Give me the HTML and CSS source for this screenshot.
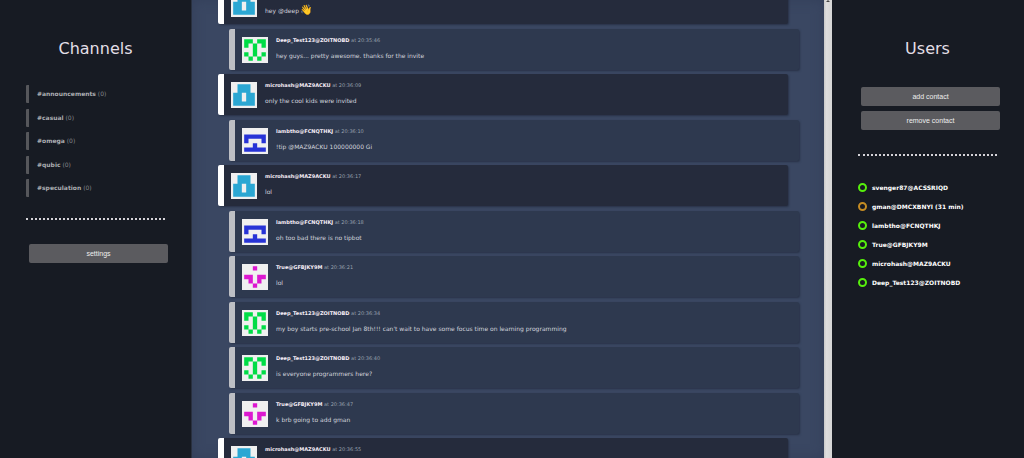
FILE: index.html
```html
<!DOCTYPE html>
<html lang="en">
<head>
    <meta charset="UTF-8">
    <meta name="viewport" content="width=device-width, initial-scale=1.0">
    <title>Chat</title>
    <link rel="stylesheet" href="styles.css">
</head>
<body>
    <!-- Avatars -->
    <svg class="symbols" width="0" height="0" aria-hidden="true">
        <symbol id="deep" viewBox="-1 -1 12 12"><path fill="#00dc46" d="M0 0h4v2h-2v2h-2zM6 0h4v4h-2v-2h-2zM4 2h2v6h-2zM0 6h2v2h-2zM8 6h2v2h-2zM2 8h2v2h-2zM6 8h2v2h-2z"/></symbol>
        <symbol id="micro" viewBox="-1 -1 12 12"><path fill="#2ba7d3" fill-rule="evenodd" d="M2 0h6v4h2v6h-10v-6h2zM4 4v4h2v-4z"/></symbol>
        <symbol id="lamb" viewBox="-1 -1 12 12"><path fill="#2733d6" d="M0 2h10v4h-2v-2h-6v2h-2zM4 6h2v2h4v2h-10v-2h4z"/></symbol>
        <symbol id="true" viewBox="-1 -1 12 12"><path fill="#dc18d0" d="M4 0h2v2h-2zM0 4h4v4h-2v-2h-2zM6 4h4v2h-2v2h-2zM4 8h2v2h-2z"/></symbol>
    </svg>

    <div class="app">
        <aside class="sidebar channels">
            <h1>Channels</h1>
            <ul class="channel-list">
                <li><b>#announcements</b> (0)</li>
                <li><b>#casual</b> (0)</li>
                <li><b>#omega</b> (0)</li>
                <li><b>#qubic</b> (0)</li>
                <li><b>#speculation</b> (0)</li>
            </ul>
            <hr>
            <button type="button">settings</button>
        </aside>

        <main class="chat">
            <div class="messages">
                <article class="message own">
                    <svg class="avatar"><use href="#micro"/></svg>
                    <div><h2></h2><p>hey @deep <span class="emoji">👋</span></p></div>
                </article>
                <article class="message">
                    <svg class="avatar"><use href="#deep"/></svg>
                    <div><h2><b>Deep_Test123@ZOITNOBD</b> at 20:35:46</h2><p>hey guys... pretty awesome. thanks for the invite</p></div>
                </article>
                <article class="message own">
                    <svg class="avatar"><use href="#micro"/></svg>
                    <div><h2><b>microhash@MAZ9ACKU</b> at 20:36:09</h2><p>only the cool kids were invited</p></div>
                </article>
                <article class="message">
                    <svg class="avatar"><use href="#lamb"/></svg>
                    <div><h2><b>lambtho@FCNQTHKJ</b> at 20:36:10</h2><p>!tip @MAZ9ACKU 100000000 Gi</p></div>
                </article>
                <article class="message own">
                    <svg class="avatar"><use href="#micro"/></svg>
                    <div><h2><b>microhash@MAZ9ACKU</b> at 20:36:17</h2><p>lol</p></div>
                </article>
                <article class="message">
                    <svg class="avatar"><use href="#lamb"/></svg>
                    <div><h2><b>lambtho@FCNQTHKJ</b> at 20:36:18</h2><p>oh too bad there is no tipbot</p></div>
                </article>
                <article class="message">
                    <svg class="avatar"><use href="#true"/></svg>
                    <div><h2><b>True@GFBJKY9M</b> at 20:36:21</h2><p>lol</p></div>
                </article>
                <article class="message">
                    <svg class="avatar"><use href="#deep"/></svg>
                    <div><h2><b>Deep_Test123@ZOITNOBD</b> at 20:36:34</h2><p>my boy starts pre-school Jan 8th!!! can't wait to have some focus time on learning programming</p></div>
                </article>
                <article class="message">
                    <svg class="avatar"><use href="#deep"/></svg>
                    <div><h2><b>Deep_Test123@ZOITNOBD</b> at 20:36:40</h2><p>is everyone programmers here?</p></div>
                </article>
                <article class="message">
                    <svg class="avatar"><use href="#true"/></svg>
                    <div><h2><b>True@GFBJKY9M</b> at 20:36:47</h2><p>k brb going to add gman</p></div>
                </article>
                <article class="message own">
                    <svg class="avatar"><use href="#micro"/></svg>
                    <div><h2><b>microhash@MAZ9ACKU</b> at 20:36:55</h2></div>
                </article>
            </div>
        </main>

        <div class="scrollbar">
            <svg width="8" height="4" viewBox="0 0 8 4"><path fill="#444" d="M4 0l2 2h-4z"/></svg>
        </div>

        <aside class="sidebar users">
            <h1>Users</h1>
            <button type="button">add contact</button>
            <button type="button">remove contact</button>
            <hr>
            <ul class="user-list">
                <li>svenger87@ACSSRIQD</li>
                <li class="idle">gman@DMCXBNYI (31 min)</li>
                <li>lambtho@FCNQTHKJ</li>
                <li>True@GFBJKY9M</li>
                <li>microhash@MAZ9ACKU</li>
                <li>Deep_Test123@ZOITNOBD</li>
            </ul>
        </aside>
    </div>
</body>
</html>
```
FILE: styles.css
```css
*, *::before {
    box-sizing: border-box;
}

body {
    margin: 0;
    background: #171b23;
    color: #e3dfe6;
    font-family: "DejaVu Sans", sans-serif;
    font-size: 6px;
    line-height: 8px;
}

h1, h2, p, ul {
    margin: 0;
    padding: 0;
    font-weight: normal;
}

ul {
    list-style: none;
}

.symbols {
    position: absolute;
}

.app {
    display: grid;
    grid-template-columns: 192px 1fr 8px 192px;
    height: 100vh;
    overflow: hidden;
}

/* Sidebars */
.sidebar {
    padding: 39px 26px 0;
}

.sidebar h1 {
    font-size: 16px;
    line-height: 20px;
    text-align: center;
}

.channels {
    border-right: 1px solid #29303f;
}

.channel-list {
    display: flex;
    flex-direction: column;
    justify-content: space-between;
    height: 112px;
    margin-top: 26px;
    color: #85888d;
}

.channel-list li {
    height: 18px;
    padding-left: 8px;
    border-left: 3px solid #56575b;
    border-radius: 1px;
    line-height: 18px;
}

.channel-list b {
    color: #acaeb2;
}

hr {
    height: 0;
    margin: 21px 0 0;
    border: 0;
    border-top: 2px dotted #d5d3d8;
}

button {
    display: block;
    width: 100%;
    height: 19px;
    padding: 0;
    border: 0;
    border-radius: 2px;
    background: #5b5b5f;
    color: #eee;
    font-family: "Liberation Sans", Arial, sans-serif;
    font-size: 7px;
}

.channels button {
    margin: 24px 0 0 3px;
}

.users {
    padding-right: 27px;
}

.users button {
    margin: 0 0 5px 3px;
}

.users h1 {
    margin-bottom: 28px;
}

.users hr {
    margin-top: 24px;
}

.user-list {
    margin-top: 22px;
    color: #fff;
    font-weight: bold;
}

.user-list li {
    display: flex;
    align-items: center;
    gap: 5px;
    height: 19px;
}

.user-list li::before {
    content: "";
    width: 9px;
    height: 9px;
    border: 2px solid #56ef0c;
    border-radius: 50%;
}

.user-list .idle::before {
    border-color: #c58c23;
}

/* Chat */
.chat {
    display: flex;
    padding: 0 25px 0 26px;
    background: #3a4762;
    box-shadow: inset 0 0 12px #333f5a;
}

.messages {
    display: flex;
    flex: 1;
    flex-direction: column;
    justify-content: space-between;
    margin: -17px 0 -21px;
}

.message {
    display: flex;
    gap: 8px;
    height: 41px;
    margin-left: 11px;
    padding: 8px 7px;
    border-left: 6px solid #bdbfc4;
    border-radius: 2px;
    background: #2e394f;
    box-shadow: 1px 1px 2px #293247;
}

.message.own {
    margin: 0 11px 0 0;
    border-color: #fff;
    background: #252b3c;
}

.avatar {
    width: 26px;
    height: 26px;
    background: #f0f0f0;
}

.message h2 {
    min-height: 6px;
    color: #98a1ae;
    font-size: 5px;
    line-height: 6px;
}

.message b {
    color: #f6eef7;
}

.message p {
    margin-top: 9px;
    color: #d2d4dc;
}

.emoji {
    font-family: "Noto Color Emoji", sans-serif;
    font-size: 10px;
}

.scrollbar {
    background: linear-gradient(to right, #c9c9c9, #dedede 30%, #d5d5d5);
    line-height: 4px;
}
```
